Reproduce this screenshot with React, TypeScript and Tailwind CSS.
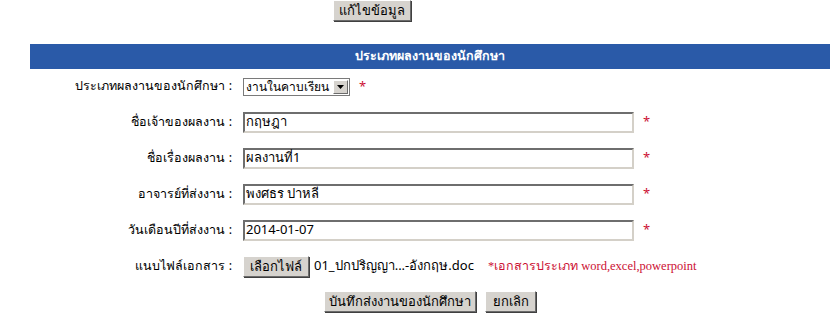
const FONT = "font-['Tahoma','Noto_Sans','DejaVu_Sans',sans-serif]"

const btn =
  'bg-[#d6d3ce] border border-t-white border-l-white border-r-[#6b6b6b] border-b-[#6b6b6b] shadow-[1px_1px_0_#404040] text-[13px] text-black leading-none whitespace-nowrap'

const fieldBorder =
  'border-2 border-t-[#6e6e6e] border-l-[#6e6e6e] border-r-[#d4d0c8] border-b-[#d4d0c8]'

function Star() {
  return <span className="text-[#cc1033] text-[13px] ml-[9px]">*</span>
}

function Label({ text }: { text: string }) {
  return (
    <div className="w-[203px] text-right pr-[1px] text-[12.5px] text-black whitespace-nowrap">{text} :</div>
  )
}

function Row({ label, children }: { label: string; children: React.ReactNode }) {
  return (
    <div className="flex items-center h-[36px]">
      <Label text={label} />
      <div className="flex items-center pl-[10px]">{children}</div>
    </div>
  )
}

function TextField({ value }: { value: string }) {
  return (
    <div className="flex items-center">
      <div className={`w-[391px] h-[21px] ${fieldBorder} bg-white flex items-center pl-[1px] text-[13px] text-black whitespace-nowrap`}>
        {value}
      </div>
      <Star />
    </div>
  )
}

export default function App() {
  return (
    <main className={`bg-white w-[840px] h-[323px] ${FONT}`}>
      <div className="flex pl-[333px]">
        <button className={`${btn} w-[78px] h-[21px]`}>แก้ไขข้อมูล</button>
      </div>

      <div className="ml-[30px] w-[800px] mt-[23px]">
        <div className="h-[25px] bg-[#2a5aa8] text-white font-bold text-[12.5px] flex items-center justify-center">
          ประเภทผลงานของนักศึกษา
        </div>

        <div className="flex items-center h-[35px]">
          <Label text="ประเภทผลงานของนักศึกษา" />
          <div className="flex items-center pl-[10px]">
            <div className="h-[18px] w-[107px] border border-[#7a7a7a] bg-white flex items-center">
              <span className="flex-1 text-[12px] pl-[2px] leading-none whitespace-nowrap">งานในคาบเรียน</span>
              <span className="w-[15px] h-[14px] mr-[1px] bg-[#d6d3ce] border border-t-white border-l-white border-r-[#6b6b6b] border-b-[#6b6b6b] flex items-center justify-center">
                <svg width="7" height="4" viewBox="0 0 7 4">
                  <path d="M0 0h7L3.5 4z" fill="#000" />
                </svg>
              </span>
            </div>
            <Star />
          </div>
        </div>

        <Row label="ชื่อเจ้าของผลงาน">
          <TextField value="กฤษฎา" />
        </Row>
        <Row label="ชื่อเรื่องผลงาน">
          <TextField value="ผลงานที่1" />
        </Row>
        <Row label="อาจารย์ที่ส่งงาน">
          <TextField value="พงศธร ปาหลี" />
        </Row>
        <Row label="วันเดือนปีที่ส่งงาน">
          <TextField value="2014-01-07" />
        </Row>
        <Row label="แนบไฟล์เอกสาร">
          <button className={`${btn} w-[66px] h-[21px]`}>เลือกไฟล์</button>
          <span className="ml-[5px] text-[13px] text-black whitespace-nowrap">01_ปกปริญญา...-อังกฤษ.doc</span>
          <span className="ml-[14px] text-[12.5px] text-[#cc1033] whitespace-nowrap font-['Liberation_Serif','Noto_Sans',serif]">
            *เอกสารประเภท word,excel,powerpoint
          </span>
        </Row>

        <div className="flex justify-center gap-[9px] pt-[7px]">
          <button className={`${btn} w-[152px] h-[21px]`}>บันทึกส่งงานของนักศึกษา</button>
          <button className={`${btn} w-[51px] h-[21px]`}>ยกเลิก</button>
        </div>
      </div>
    </main>
  )
}
